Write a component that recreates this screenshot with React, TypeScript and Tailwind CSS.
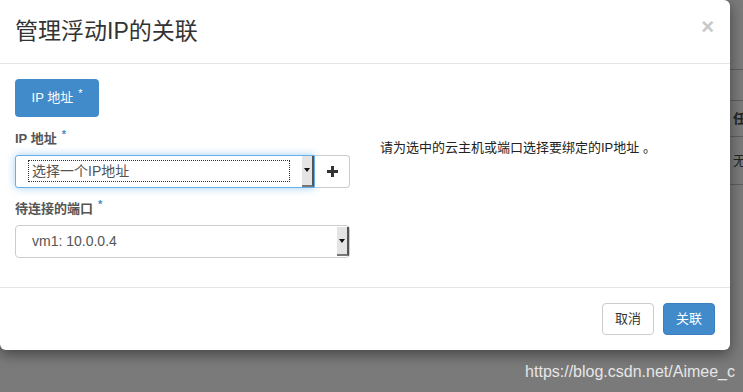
import React from 'react';

const font = { fontFamily: '"Liberation Sans", "Noto Sans CJK SC", sans-serif' };

const SelectArrow: React.FC = () => (
  <div className="flex h-full w-[12px] items-center justify-center border-r-2 border-b-2 border-r-[#555] border-b-[#777] bg-[#e4e4e4]">
    <svg width="6" height="4" viewBox="0 0 6 4">
      <path d="M0 0h6L3 4z" fill="#111" />
    </svg>
  </div>
);

const Req: React.FC<{ light?: boolean }> = ({ light }) => (
  <span className={`relative -top-[5px] ml-[5px] text-[11px] ${light ? 'text-white' : 'text-[#3f8acb]'}`}>*</span>
);

const App: React.FC = () => {
  return (
    <div className="relative h-[392px] w-[743px] overflow-hidden bg-[#7a7a7a]" style={font}>
      {/* page behind the overlay */}
      <div className="flex h-full justify-end">
        <div className="w-[13px] pt-[69px] text-[13px] text-[#222]">
          <div className="h-[31px] border-t border-[#5e5e5e]" />
          <div className="flex h-[36px] items-center border-t border-[#5e5e5e] pl-[3px] font-bold">任</div>
          <div className="flex h-[48px] items-center border-t border-[#5e5e5e] pl-[3px]">无</div>
          <div className="border-t border-[#5e5e5e]" />
        </div>
      </div>

      {/* modal */}
      <div className="absolute top-0 left-0 w-[730px] rounded-r-[6px] rounded-bl-[6px] bg-white shadow-[0_4px_14px_rgba(0,0,0,0.45)]">
        <div className="flex h-[64px] items-center justify-between border-b border-[#e5e5e5] px-[15px]">
          <h4 className="text-[23px] font-normal text-[#333]">管理浮动IP的关联</h4>
          <span className="-mt-[10px] mr-[1px] text-[22px] leading-none font-bold text-[#c8c8c8]">×</span>
        </div>

        <div className="px-[15px] pt-[15px] pb-[29px]">
          <div className="flex h-[38px] w-[84px] items-center justify-center rounded-[4px] bg-[#428bca] text-[13px] text-white">
            IP 地址<Req light />
          </div>

          <div className="mt-[12px] flex">
            <div className="w-[335px]">
              <div className="mb-[6px] text-[13px] font-bold text-[#555]">
                IP 地址<Req />
              </div>
              <div className="flex h-[33px]">
                <div className="flex flex-1 items-center rounded-l-[3px] border border-[#66afe9] bg-white pl-[12px] shadow-[0_0_8px_rgba(102,175,233,0.6)]">
                  <div className="flex h-[22px] flex-1 items-center border border-dotted border-[#333] pl-[3px] text-[14px] text-[#555]">
                    选择一个IP地址
                  </div>
                  <div className="ml-[12px] h-full">
                    <SelectArrow />
                  </div>
                </div>
                <div className="flex w-[35px] items-center justify-center rounded-r-[4px] border border-l-0 border-[#ccc] bg-white">
                  <svg width="11" height="11" viewBox="0 0 11 11">
                    <path d="M4 0h3v4h4v3H7v4H4V7H0V4h4z" fill="#333" />
                  </svg>
                </div>
              </div>

              <div className="mt-[11px] mb-[7px] text-[13px] font-bold text-[#555]">
                待连接的端口<Req />
              </div>
              <div className="flex h-[33px] items-center rounded-[4px] border border-[#ccc] bg-white pl-[16px]">
                <div className="flex-1 text-[14px] text-[#555]">vm1: 10.0.0.4</div>
                <div className="h-full py-[1px]">
                  <SelectArrow />
                </div>
              </div>
            </div>
            <div className="pt-[9px] pl-[30px] text-[13px] text-[#222]">
              请为选中的云主机或端口选择要绑定的IP地址 。
            </div>
          </div>
        </div>

        <div className="flex justify-end gap-[9px] border-t border-[#e5e5e5] p-[15px]">
          <button className="h-[32px] w-[52px] rounded-[4px] border border-[#ccc] bg-white text-[13px] text-[#333]">
            取消
          </button>
          <button className="h-[32px] w-[52px] rounded-[4px] border border-[#3b7fc0] bg-[#428bca] text-[13px] text-white">
            关联
          </button>
        </div>
      </div>

      <div className="absolute right-[8px] bottom-[8px] text-[16px] text-[#e6e6e6]">https://blog.csdn.net/Aimee_c</div>
    </div>
  );
};

export default App;
